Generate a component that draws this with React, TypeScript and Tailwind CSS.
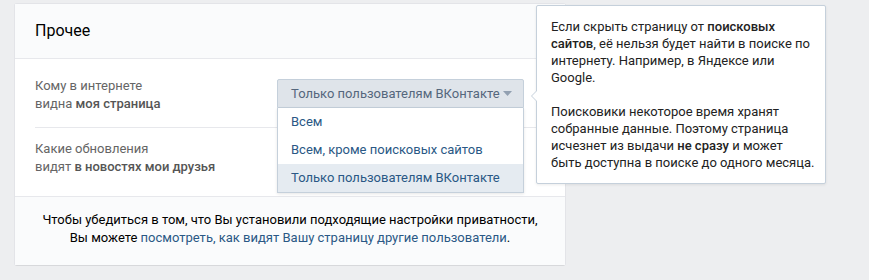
import React from "react"

const font = "font-['Roboto','Open_Sans','Liberation_Sans',sans-serif]"

const options = ["Всем", "Всем, кроме поисковых сайтов", "Только пользователям ВКонтакте"]

function Tooltip() {
  return (
    <div className="absolute left-[259px] top-[-74px] w-[290px] bg-white border border-[#c5d0db] rounded-[2px] shadow-[0_1px_3px_rgba(0,0,0,0.08)] px-[14px] pt-[12px] pb-[12px] text-[13px] leading-[17px] text-[#222] whitespace-nowrap">
      {/* arrow */}
      <div className="absolute left-[-6px] top-[84px] w-0 h-0 border-y-[6px] border-y-transparent border-r-[6px] border-r-[#c5d0db]" />
      <div className="absolute left-[-5px] top-[85px] w-0 h-0 border-y-[5px] border-y-transparent border-r-[5px] border-r-white" />
      <p>
        Если скрыть страницу от <b className="font-medium">поисковых</b>
        <br />
        <b className="font-medium">сайтов</b>, её нельзя будет найти в поиске по
        <br />
        интернету. Например, в Яндексе или
        <br />
        Google.
      </p>
      <p className="mt-[17px]">
        Поисковики некоторое время хранят
        <br />
        собранные данные. Поэтому страница
        <br />
        исчезнет из выдачи <b className="font-medium">не сразу</b> и может
        <br />
        быть доступна в поиске до одного месяца.
      </p>
    </div>
  )
}

function Select() {
  return (
    <div className="relative w-[247px] mt-[2px]">
      <div className="h-[29px] flex items-center justify-between pl-[13px] pr-[11px] bg-[#dfe4ea] border border-[#c5d0db] rounded-t-[2px] text-[13px] text-[#55677d]">
        <span className="whitespace-nowrap">Только пользователям ВКонтакте</span>
        <svg width="9" height="5" viewBox="0 0 9 5" className="shrink-0">
          <path d="M0 0h9L4.5 5z" fill="#92a0b1" />
        </svg>
      </div>
      <ul className="absolute left-0 right-0 top-[29px] bg-white border border-t-0 border-[#c5d0db] shadow-[0_1px_3px_rgba(0,0,0,0.1)] z-10">
        {options.map((o, i) => (
          <li
            key={i}
            className={`h-[28px] flex items-center pl-[13px] text-[13px] text-[#2a5885] ${
              i === 2 ? "bg-[#e5ebf1]" : ""
            }`}
          >
            {o}
          </li>
        ))}
      </ul>
      <Tooltip />
    </div>
  )
}

export default function App() {
  return (
    <div className={`min-h-[280px] bg-[#edeef0] pt-[4px] pl-[15px] ${font}`}>
      <div className="w-[550px] bg-white rounded-[2px] shadow-[0_1px_0_0_#d7d8db,0_0_0_1px_#e3e4e8]">
        <div className="h-[55px] flex items-center px-[20px] bg-[#fafbfc] border-b border-[#e7e8ec] text-[16px] text-black">
          Прочее
        </div>

        <div className="px-[20px]">
          <div className="flex items-start pt-[18px] pb-[14px] border-b border-[#e7e8ec]">
            <div className="w-[242px] shrink-0 text-[13px] leading-[18px] text-[#656565]">
              Кому в интернете
              <br />
              видна <b className="font-medium text-[#555]">моя страница</b>
            </div>
            <Select />
          </div>

          <div className="pt-[12px] pb-[20px]">
            <div className="text-[13px] leading-[18px] text-[#656565]">
              Какие обновления
              <br />
              видят <b className="font-medium text-[#555]">в новостях мои друзья</b>
            </div>
          </div>
        </div>

        <div className="bg-[#fafbfc] border-t border-[#e7e8ec] pt-[14px] pb-[18px] text-center text-[13px] leading-[18px] text-black">
          Чтобы убедиться в том, что Вы установили подходящие настройки приватности,
          <br />
          Вы можете <a className="text-[#2a5885]">посмотреть, как видят Вашу страницу другие пользователи</a>.
        </div>
      </div>
    </div>
  )
}
